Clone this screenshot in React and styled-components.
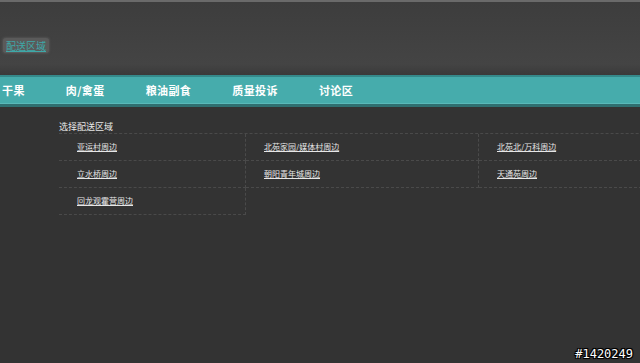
import React from "react";
import styled, { createGlobalStyle } from "styled-components";

const Global = createGlobalStyle`
  html, body { margin: 0; padding: 0; background: #333333; overflow: hidden; }
  body { font-family: "Noto Sans CJK SC", "Liberation Sans", sans-serif; }
`;

const Page = styled.div`
  position: relative;
  width: 640px;
  height: 363px;
  background: #333333;
  overflow: hidden;
`;

const Header = styled.header`
  height: 75px;
  border-top: 2px solid #6a6a6a;
  background: linear-gradient(#3d3d3d, #444444 85%, #3a3a3a);
  display: flex;
  align-items: flex-start;
  padding: 36px 0 0 3px;
  box-sizing: border-box;
`;

const AreaButton = styled.div`
  background: #5a5a5a;
  border-radius: 3px;
  box-shadow: 0 0 2px 1px #505050;
  color: #3fa8a8;
  font-size: 10px;
  line-height: 15px;
  padding: 0 3px;
  text-decoration: underline;
`;

const Nav = styled.nav`
  height: 27px;
  background: #46acac;
  border-top: 2px solid #35898a;
  border-bottom: 3px solid #2f6f70;
  display: flex;
  align-items: center;
  gap: 41px;
  padding-left: 2px;
  box-shadow: inset 0 -1px 0 #5ab9b9;
`;

const NavItem = styled.span`
  color: #ffffff;
  font-size: 11px;
  font-weight: bold;
  letter-spacing: 0.4px;
  line-height: 27px;
  white-space: nowrap;
`;

const Content = styled.section`
  padding: 14px 0 0 59px;
`;

const Title = styled.div`
  color: #e8e8e8;
  font-size: 9px;
  line-height: 12px;
  height: 12px;
  border-bottom: 1px dashed #4a4a4a;
  width: 700px;
`;

const Grid = styled.div`
  display: grid;
  grid-template-columns: 187px 233px 233px;
  width: 653px;
`;

const Cell = styled.div`
  height: 26px;
  border-bottom: 1px dashed #4a4a4a;
  border-right: 1px dashed #4a4a4a;
  display: flex;
  align-items: center;
  padding-left: 18px;
`;

const Link = styled.a`
  color: #e6e6e6;
  font-size: 8px;
  line-height: 10px;
  text-decoration: underline;
  white-space: nowrap;
`;

const Stamp = styled.div`
  position: absolute;
  right: 7px;
  bottom: 2px;
  color: #ffffff;
  font-family: "DejaVu Sans Mono", monospace;
  font-size: 12px;
  text-shadow: 0 0 2px #000, 1px 1px 0 #000, -1px -1px 0 #000, 1px -1px 0 #000, -1px 1px 0 #000;
`;

const navItems = ["干果", "肉/禽蛋", "粮油副食", "质量投诉", "讨论区"];
const areas = [
  "亚运村周边",
  "北苑家园/媒体村周边",
  "北苑北/万科周边",
  "立水桥周边",
  "朝阳青年城周边",
  "天通苑周边",
  "回龙观霍营周边",
];

export default function App() {
  return (
    <Page>
      <Global />
      <Header>
        <AreaButton>配送区域</AreaButton>
      </Header>
      <Nav>
        {navItems.map((n) => (
          <NavItem key={n}>{n}</NavItem>
        ))}
      </Nav>
      <Content>
        <Title>选择配送区域</Title>
        <Grid>
          {areas.map((a) => (
            <Cell key={a}>
              <Link href="#">{a}</Link>
            </Cell>
          ))}
        </Grid>
      </Content>
      <Stamp>#1420249</Stamp>
    </Page>
  );
}
